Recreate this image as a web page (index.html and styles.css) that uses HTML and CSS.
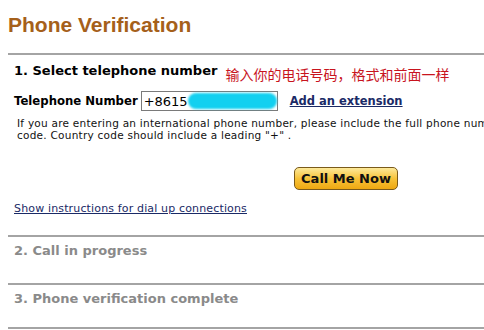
FILE: index.html
```html
<!DOCTYPE html>
<html lang="en">
<head>
    <meta charset="UTF-8">
    <title>Phone Verification</title>
    <link rel="stylesheet" href="styles.css">
</head>
<body>

<div class="page">
    <h1>Phone Verification</h1>

    <div class="step">
        <div class="step-head">
            <h2>1. Select telephone number</h2>
            <span class="note">输入你的电话号码，格式和前面一样</span>
        </div>

        <div class="phone-row">
            <label for="phone">Telephone Number</label>
            <div class="phone-box">
                <span class="phone-text">+8615</span>
                <span class="blur"></span>
            </div>
            <a href="#" class="ext">Add an extension</a>
        </div>

        <p class="help">If you are entering an international phone number, please include the full phone number with country<br>code. Country code should include a leading "+" .</p>

        <div class="call-row">
            <button class="call-btn">Call Me Now</button>
        </div>

        <a href="#" class="dialup">Show instructions for dial up connections</a>
    </div>

    <div class="step off">
        <h2>2. Call in progress</h2>
    </div>

    <div class="step off last">
        <h2>3. Phone verification complete</h2>
    </div>
    <div class="step"></div>
</div>

</body>
</html>
```

FILE: styles.css
```css
body {
    margin: 0;
    padding: 0 0 0 8px;
    background-color: #fff;
    font-family: Verdana, "DejaVu Sans", sans-serif;
    overflow: hidden;
}
.page {
    width: 620px;
}
h1 {
    font-family: Arial, "Liberation Sans", sans-serif;
    font-size: 21px;
    line-height: 26px;
    color: #a5601a;
    margin: 12px 0 15px 0;
}
.step {
    border-top: 2px solid #a4a4a4;
    padding: 0 6px;
}
.step h2 {
    font-size: 13px;
    margin: 0;
    line-height: 18px;
}
.step-head {
    display: flex;
    align-items: flex-end;
    padding-top: 7px;
}
.note {
    font-family: "Noto Sans CJK SC", sans-serif;
    color: #c8141e;
    font-size: 14px;
    line-height: 18px;
    margin-left: 8px;
    position: relative;
    top: 3px;
}
.phone-row {
    display: flex;
    align-items: center;
    margin-top: 11px;
}
.phone-row label {
    font-size: 11.7px;
    font-weight: bold;
}
.phone-box {
    display: flex;
    align-items: center;
    width: 133px;
    height: 18px;
    border: 1px solid #7a7a7a;
    margin-left: 3px;
    padding-left: 2px;
}
.phone-text {
    font-size: 13px;
}
.blur {
    width: 90px;
    height: 16px;
    border-radius: 8px;
    background-color: #12d0f0;
    filter: blur(1px);
}
.ext {
    font-size: 11.5px;
    font-weight: bold;
    color: #1a2a66;
    margin-left: 12px;
}
.help {
    font-size: 10.5px;
    letter-spacing: 0.25px;
    line-height: 12px;
    margin: 6px 0 0 3px;
    color: #111;
}
.call-row {
    padding-left: 280px;
    margin-top: 26px;
}
.call-btn {
    font-family: Verdana, "DejaVu Sans", sans-serif;
    font-size: 13px;
    font-weight: bold;
    color: #111;
    width: 104px;
    height: 23px;
    border: 1px solid #7a5a1a;
    border-radius: 5px;
    background: linear-gradient(#fde99a, #f7c33a 50%, #eea812);
    padding: 0;
}
.dialup {
    display: block;
    font-size: 11px;
    letter-spacing: 0.15px;
    color: #1a2a66;
    margin: 12px 0 20px 0;
}
.step.off h2 {
    color: #8a8a8a;
    padding: 5px 0 23px 0;
}
.step.last h2 {
    padding-bottom: 19px;
}
```
